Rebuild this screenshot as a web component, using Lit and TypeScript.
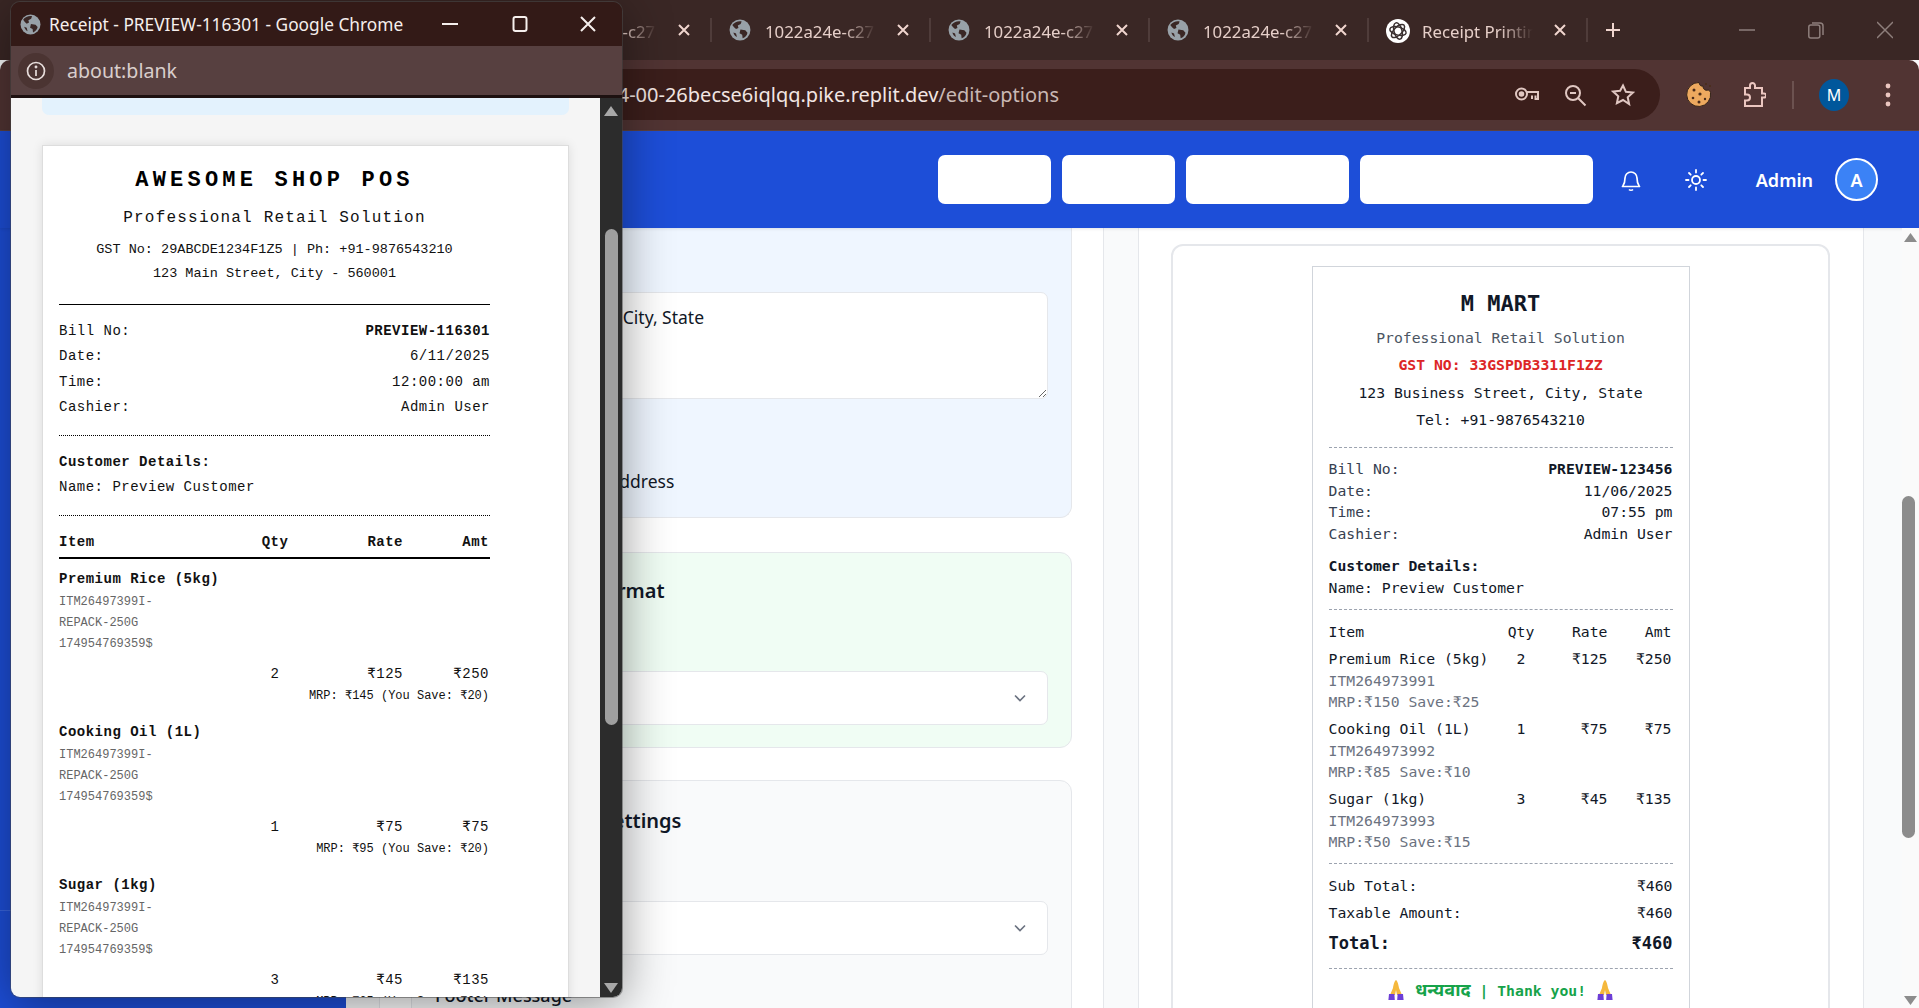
import { LitElement, html, css, svg } from "lit";
import { customElement } from "lit/decorators.js";

const globe = (s: number) => html`<svg width=${s} height=${s} viewBox="0 0 20 20"><circle cx="10" cy="10" r="9.5" fill="#98a1a8"/><path d="M3 5.5C5 2.5 9 1.5 11.5 2.2L10.6 4.6 8 6 8.6 8.2 6.4 9.2 4.6 7.6ZM10.4 9.6l4.4.6 2 2.2c-.4 2.4-2.2 4.4-4.4 5.2l-.4-3.2-2.4-1.4ZM4 12.2l2.4 1 .8 3.2C5.6 15.6 4.4 14 4 12.2Z" fill="#3a2725"/></svg>`;

const knot = html`<svg width="24" height="24" viewBox="0 0 24 24"><circle cx="12" cy="12" r="12" fill="#fff"/>
${[15, 75, 135].map((a) => svg`<ellipse cx="12" cy="12" rx="8.4" ry="4" transform="rotate(${a} 12 12)" fill="none" stroke="#3a3030" stroke-width="1.5"/>`)}
</svg>`;

const chevron = html`<svg class="chev" width="16" height="16" viewBox="0 0 16 16"><path d="M3 5.5l5 5 5-5" fill="none" stroke="#6b7280" stroke-width="1.6"/></svg>`;

const namaste = html`<svg class="nam" width="18" height="22" viewBox="0 0 18 22"><path d="M9 1c-1.600 1-2.600 5-3 8l-3 7h5l1-5 1 5h5l-3-7c-.4-3-1.400-7-3-8Z" fill="#f5b83d"/><path d="M2 15h5.400l.4 6H1.400ZM10.600 15H16l.6 6h-6.400Z" fill="#6d3fd6"/></svg>`;

interface PopItem { name: string; qty: string; rate: string; amt: string; mrp: string }
const popItems: PopItem[] = [
  { name: "Premium Rice (5kg)", qty: "2", rate: "₹125", amt: "₹250", mrp: "MRP: ₹145 (You Save: ₹20)" },
  { name: "Cooking Oil (1L)", qty: "1", rate: "₹75", amt: "₹75", mrp: "MRP: ₹95 (You Save: ₹20)" },
  { name: "Sugar (1kg)", qty: "3", rate: "₹45", amt: "₹135", mrp: "MRP: ₹65 (You Save: ₹20)" },
];
const rcItems = [
  { name: "Premium Rice (5kg)", qty: "2", rate: "₹125", amt: "₹250", code: "ITM264973991", mrp: "MRP:₹150 Save:₹25" },
  { name: "Cooking Oil (1L)", qty: "1", rate: "₹75", amt: "₹75", code: "ITM264973992", mrp: "MRP:₹85 Save:₹10" },
  { name: "Sugar (1kg)", qty: "3", rate: "₹45", amt: "₹135", code: "ITM264973993", mrp: "MRP:₹50 Save:₹15" },
];

@customElement("app-root")
export class AppRoot extends LitElement {
  static styles = css`
    :host { display: block; width: 1919px; height: 1008px; overflow: hidden; position: relative; font-family: "Noto Sans", "Open Sans", sans-serif; background: #f9fafb; color: #111827; }
    * { box-sizing: border-box; }
    .page { display: flex; flex-direction: column; height: 1008px; }

    .tabs { height: 60px; background: #3a2725; display: flex; padding-left: 493px; flex: none; }
    .tab { width: 219px; height: 60px; position: relative; display: flex; align-items: center; padding-left: 53px; }
    .tab::after { content: ""; position: absolute; right: 0; top: 18px; width: 2px; height: 24px; background: #4f3c3a; }
    .tab .ico { position: absolute; left: 17px; top: 19px; height: 24px; }
    .tab .t { width: 111px; overflow: hidden; white-space: nowrap; font-size: 16.8px; color: #e6cfc9; -webkit-mask-image: linear-gradient(90deg, #000 70%, transparent); mask-image: linear-gradient(90deg, #000 70%, transparent); margin-top: 3px; }
    .tab .x { position: absolute; left: 184px; top: 23px; }
    .plus { margin-left: 15px; margin-top: 20px; }
    .win { margin-left: auto; display: flex; padding-right: 26px; gap: 53px; padding-top: 20px; }

    .toolbar { height: 71px; flex: none; background: #513433; border-radius: 10px 10px 0 0; border-bottom: 1px solid #5f4341; display: flex; padding-top: 9px; }
    .url { margin-left: 60px; width: 1600px; height: 51px; background: #3b1e1b; border-radius: 26px; display: flex; }
    .url .txt { flex: 1; overflow: hidden; white-space: nowrap; display: flex; justify-content: flex-end; font-size: 20px; line-height: 52px; color: #f2e6e3; }
    .url .txt span { color: #c9b8b4; }
    .url .ic { width: 601px; display: flex; justify-content: flex-end; align-items: center; gap: 24px; padding-right: 25px; }
    .tools { display: flex; height: 51px; align-items: center; position: relative; }
    .cookie { margin-left: 26px; }
    .puzzle { margin-left: 30px; }
    .sep { width: 2px; height: 28px; background: #6c5250; margin-left: 26px; }
    .me { width: 30px; height: 32px; border-radius: 50%; background: #00579b; color: #fff; font-size: 16px; display: flex; align-items: center; justify-content: center; margin-left: 25px; }
    .dots { margin-left: 36px; }

    .head { height: 97px; flex: none; background: #1d4ed8; display: flex; align-items: center; justify-content: flex-end; padding-right: 41px; box-shadow: 0 1px 3px rgba(0,0,0,.1); position: relative; }
    .btn { height: 49px; background: #fff; border-radius: 7px; margin-left: 11px; }
    .bell { margin-left: 26px; display: flex; }
    .sun { margin-left: 41px; display: flex; }
    .admin { margin-left: 48px; color: #fff; font-weight: 600; font-size: 18px; }
    .av { width: 43px; height: 43px; border-radius: 50%; background: #3b82f6; border: 2px solid #fff; color: #fff; font-weight: 600; font-size: 18px; display: flex; align-items: center; justify-content: center; margin-left: 22px; }

    .body { flex: 1; min-height: 0; display: flex; overflow: hidden; }
    .side { width: 346px; flex: none; background: #1d4ed8; display: flex; flex-direction: column; }
    .side i { display: block; height: 683px; border-bottom: 1px solid #3a66e0; }
    .main { flex: 1; display: grid; grid-template-columns: 725px 726px; column-gap: 34px; padding: 0 38px 0 33px; overflow: hidden; }
    .panel { background: #fff; border-left: 1px solid #e5e7eb; border-right: 1px solid #e5e7eb; padding: 0 31px; height: 800px; }
    .panel.r { padding: 16px 33px 0 32px; }
    .card { border: 1px solid #e5e7eb; border-radius: 12px; padding: 0 23px; }
    .blue { background: #eff6ff; border-top: 0; border-radius: 0 0 12px 12px; height: 290px; margin-bottom: 34px; padding-top: 64px; }
    .green { background: #f0fdf4; height: 196px; margin-bottom: 32px; padding-top: 24px; }
    .grey { background: #f9fafb; height: 260px; padding-top: 26px; }
    textarea { display: block; width: 100%; height: 107px; border: 1px solid #e5e7eb; border-radius: 7px; background: #fff; padding: 11px 12px 11px 17px; font: 17.5px/26px "Noto Sans", sans-serif; color: #111827; outline: none; }
    .chk { margin-top: 69px; font-size: 17.5px; line-height: 26px; padding-left: 47px; }
    .ttl { font-size: 20px; font-weight: 600; line-height: 28px; }
    .green .ttl { padding-left: 81px; }
    .grey .ttl { padding-left: 114px; }
    .sel { height: 54px; margin-top: 66px; background: #fff; border: 1px solid #e5e7eb; border-radius: 7px; display: flex; align-items: center; justify-content: flex-end; padding-right: 19px; }
    .chev { display: block; }
    .foot { margin-top: 27px; font-size: 18px; line-height: 26px; font-weight: 500; }

    .rcard { border: 2px solid #e5e7eb; border-radius: 12px; background: #fff; padding: 20px 0 0; height: 800px; display: flex; justify-content: center; }
    .rc { width: 378px; height: 760px; border: 1px solid #d1d5db; padding: 22px 16px 0; font-family: "DejaVu Sans Mono", "Liberation Mono", monospace; font-size: 14.75px; line-height: 22px; color: #111827; letter-spacing: 0; }
    .rc h1 { margin: 0; font-size: 22px; line-height: 30px; font-weight: 700; text-align: center; }
    .rc .pr { margin-top: 8px; color: #4b5563; text-align: center; }
    .rc .gst { margin-top: 5px; color: #dc2626; font-weight: 700; text-align: center; }
    .rc .ad { margin-top: 3px; text-align: center; line-height: 27px; }
    .dash { border-top: 1px dashed #9ca3af; height: 0; }
    .kv { display: flex; justify-content: space-between; white-space: nowrap; }
    .kv .l { color: #374151; }
    .meta { margin-top: 10px; line-height: 21.7px; }
    .b { font-weight: 700; }
    .grid { display: grid; grid-template-columns: 179px 27px 73px 64px; white-space: nowrap; }
    .grid > :nth-child(2) { text-align: center; }
    .grid > :nth-child(3), .grid > :nth-child(4) { text-align: right; }
    .sub { color: #6b7280; line-height: 21.5px; white-space: nowrap; }
    .ritem { margin-top: 5px; }
    .tot { font-size: 17px; font-weight: 700; line-height: 26px; margin-top: 6px; }
    .thx { margin-top: 8px; line-height: 24px; color: #16a34a; font-weight: 700; display: flex; justify-content: center; align-items: center; gap: 10px; }
    .thx .hi { font-family: "Noto Sans", "Noto Sans Devanagari", sans-serif; font-size: 18px; }
    .nam { display: block; }

    .sb { width: 17px; flex: none; background: #fafafa; position: relative; }
    .sb .th { position: absolute; left: 0; width: 13px; top: 268px; height: 342px; background: #8c8c8c; border-radius: 7px; }
    .sb .up { position: absolute; left: 2px; top: 4px; }
    .sb .dn { position: absolute; left: 2px; bottom: 2px; }

    .pop { position: absolute; z-index: 5; left: 11px; top: 2px; width: 611px; height: 995px; border-radius: 9px; overflow: hidden; display: flex; flex-direction: column; box-shadow: 0 8px 50px rgba(0,0,0,.42), 0 0 0 1px rgba(90,90,90,.5); }
    .pt { height: 44px; background: #331a17; display: flex; align-items: center; flex: none; color: #f6efed; font-size: 17.3px; position: relative; padding-left: 9px; gap: 8px; }
    .pt .wb { position: absolute; top: 14px; }
    .pa { height: 49px; background: #574040; flex: none; display: flex; align-items: center; padding-left: 7px; }
    .pa .cir { width: 36px; height: 36px; border-radius: 50%; background: #4b3432; display: flex; align-items: center; justify-content: center; }
    .pa .tx { margin-left: 13px; font-size: 19.6px; color: #d9cecc; }
    .pl { height: 3px; background: #1d1110; flex: none; }
    .pc { flex: 1; min-height: 0; display: flex; }
    .pv { flex: 1; background: #f5f5f5; padding: 0 31px; overflow: hidden; }
    .strip { height: 17px; background: #e3f2fd; border-radius: 0 0 7px 7px; margin-bottom: 30px; }
    .rp { background: #fff; border: 1px solid #ddd; box-shadow: 0 0 10px rgba(0,0,0,.1); padding: 22px 78px 0 16px; height: 900px; font-family: "Liberation Mono", monospace; font-size: 14px; letter-spacing: .5px; color: #111; }
    .rp h2 { margin: 0; font-size: 22px; line-height: 26px; letter-spacing: 4.2px; text-align: center; font-weight: 700; color: #000; }
    .rp .p1 { margin-top: 13px; text-align: center; font-size: 16px; letter-spacing: 1.2px; line-height: 22px; }
    .rp .p2 { text-align: center; font-size: 13.5px; letter-spacing: 0; line-height: 24px; }
    .rp .p2.f { margin-top: 9px; }
    .solid { border-top: 1px solid #000; margin-top: 18px; }
    .dot { border-top: 1px dotted #000; margin-top: 15px; }
    .rows { margin-top: 14px; line-height: 25.3px; }
    .rp .kv .l { color: #111; }
    .cu { margin-top: 14px; line-height: 25px; }
    .pg { display: grid; grid-template-columns: 189px 54px 101px 86px; white-space: nowrap; }
    .pg > :nth-child(2) { text-align: center; }
    .pg > :nth-child(3), .pg > :nth-child(4) { text-align: right; }
    .ph { margin-top: 14px; line-height: 25px; font-weight: 700; }
    .ph2 { border-top: 2px solid #000; margin-top: 2px; }
    .pi { margin-top: 9px; }
    .pi + .pi { margin-top: 15px; }
    .pn { font-weight: 700; line-height: 22px; }
    .pcode { font-size: 12px; letter-spacing: 0; line-height: 21px; color: #666; margin-top: 2px; }
    .pnum { margin-top: 8px; line-height: 22px; }
    .pm { margin-top: 1px; font-size: 12px; letter-spacing: 0; line-height: 20px; text-align: right; padding-right: 1px; }
    .psb { width: 22px; flex: none; background: #2c2c2c; position: relative; }
    .psb .th { position: absolute; left: 5px; width: 13px; top: 131px; height: 496px; background: #9f9f9f; border-radius: 7px; }
    .psb .up { position: absolute; left: 4px; top: 7px; }
    .psb .dn { position: absolute; left: 4px; bottom: 3px; }
  `;

  private tab(title: string, ico: unknown) {
    return html`<div class="tab"><span class="ico">${ico}</span><span class="t">${title}</span>
      <svg class="x" width="14" height="14" viewBox="0 0 14 14"><path d="M2 2l10 10M12 2L2 12" stroke="#f0d5ce" stroke-width="2"/></svg></div>`;
  }

  render() {
    return html`
      <div class="page">
        <div class="tabs">
          ${this.tab("1022a24e-c27", globe(22))}
          ${this.tab("1022a24e-c27", globe(22))}
          ${this.tab("1022a24e-c27", globe(22))}
          ${this.tab("1022a24e-c27", globe(22))}
          ${this.tab("Receipt Printin", knot)}
          <svg class="plus" width="20" height="20" viewBox="0 0 20 20"><path d="M10 3v14M3 10h14" stroke="#f0d5ce" stroke-width="2"/></svg>
          <div class="win">
            <svg width="16" height="20" viewBox="0 0 16 20"><path d="M0 10h16" stroke="#8e7f7c" stroke-width="1.5"/></svg>
            <svg width="16" height="20" viewBox="0 0 16 20"><rect x=".8" y="5" width="11" height="13" rx="2" fill="none" stroke="#8e7f7c" stroke-width="1.5"/><path d="M4 3h8a3 3 0 0 1 3 3v9" fill="none" stroke="#8e7f7c" stroke-width="1.5"/></svg>
            <svg width="16" height="20" viewBox="0 0 16 20"><path d="M0 2l16 16M16 2L0 18" stroke="#8e7f7c" stroke-width="1.5"/></svg>
          </div>
        </div>
        <div class="toolbar">
          <div class="url">
            <div class="txt"><div>1022a24e-c271-4d2f-b1a4-00-26becse6iqlqq.pike.replit.dev<span>/edit-options</span></div></div>
            <div class="ic">
              <svg width="24" height="24" viewBox="0 0 24 24" fill="none" stroke="#e0c7c2" stroke-width="2"><circle cx="6.500" cy="11" r="5.500"/><circle cx="6.500" cy="11" r="1.800" fill="#e0c7c2"/><path d="M12 9h11v7h-2.500v-3.500M17 12.500v3.500"/></svg>
              <svg width="24" height="24" viewBox="0 0 24 24" fill="none" stroke="#e0c7c2" stroke-width="2"><circle cx="10" cy="10" r="7"/><path d="M15 15l7.500 7.500M7 10h6"/></svg>
              <svg width="24" height="24" viewBox="0 0 24 24" fill="none" stroke="#e0c7c2" stroke-width="2"><path d="M12 2.500l2.900 6.300 6.900.8-5.100 4.700 1.400 6.800L12 17l-6.100 3.100 1.400-6.800-5.100-4.700 6.900-.8Z"/></svg>
            </div>
          </div>
          <div class="tools">
            <svg class="cookie" width="26" height="28" viewBox="0 0 26 28"><path d="M13 1.500c.5 3 2 4 4 3.500 0 3 2 5 5 4 .8 0 2 1 2.500 2.500A12 12 0 1 1 13 1.500Z" fill="#eda95f" stroke="#33231a" stroke-width="1"/><g fill="#4a2c1a"><circle cx="8" cy="9" r="1.500"/><circle cx="14" cy="13" r="1.600"/><circle cx="7" cy="17" r="1.300"/><circle cx="13" cy="21" r="1.500"/><circle cx="19" cy="18" r="1.200"/><circle cx="20" cy="3" r="1"/><circle cx="24" cy="5" r="1"/></g></svg>
            <svg class="puzzle" width="24" height="26" viewBox="0 0 24 26" fill="none" stroke="#ebc6c0" stroke-width="2"><path d="M3 6h5V3.500a2.500 2.500 0 0 1 5 0V6h7v5.500h2a2 2 0 0 1 0 4h-2V24H3v-5.500h2a3 3 0 0 0 0-6H3Z"/></svg>
            <div class="sep"></div>
            <div class="me">M</div>
            <svg class="dots" width="6" height="26" viewBox="0 0 6 26"><g fill="#ebc6c0"><circle cx="3" cy="4" r="2.400"/><circle cx="3" cy="13" r="2.400"/><circle cx="3" cy="22" r="2.400"/></g></svg>
          </div>
        </div>
        <div class="head">
          <div class="btn" style="width:113px"></div>
          <div class="btn" style="width:113px"></div>
          <div class="btn" style="width:163px"></div>
          <div class="btn" style="width:233px"></div>
          <span class="bell"><svg width="24" height="24" viewBox="0 0 24 24" fill="none" stroke="#fff" stroke-width="1.700" stroke-linejoin="round"><path d="M6 10a6 6 0 0 1 12 0c0 6 2 7.500 2.500 8.500h-17C4 17.500 6 16 6 10Z"/><path d="M10 21.500c1 1 3 1 4 0"/></svg></span>
          <span class="sun"><svg width="24" height="24" viewBox="0 0 24 24" fill="none" stroke="#fff" stroke-width="1.800" stroke-linecap="round"><circle cx="12" cy="12" r="4"/><path d="M12 2v2.500M12 19.500V22M2 12h2.500M19.500 12H22M5 5l1.700 1.700M17.300 17.300L19 19M5 19l1.700-1.700M17.300 6.700L19 5"/></svg></span>
          <span class="admin">Admin</span>
          <div class="av">A</div>
        </div>
        <div class="body">
          <div class="side"><i></i></div>
          <div class="main">
            <div class="panel">
              <div class="card blue">
                <textarea .value=${"123 Business Street, City, State"}></textarea>
                <div class="chk">Show Business Address</div>
              </div>
              <div class="card green">
                <div class="ttl">Receipt Format</div>
                <div class="sel">${chevron}</div>
              </div>
              <div class="card grey">
                <div class="ttl">Print Settings</div>
                <div class="sel">${chevron}</div>
                <div class="foot">Footer Message</div>
              </div>
            </div>
            <div class="panel r">
              <div class="rcard">
                <div class="rc">
                  <h1>M MART</h1>
                  <div class="pr">Professional Retail Solution</div>
                  <div class="gst">GST NO: 33GSPDB3311F1ZZ</div>
                  <div class="ad">123 Business Street, City, State<br />Tel: +91-9876543210</div>
                  <div class="dash" style="margin-top:14px"></div>
                  <div class="meta">
                    <div class="kv"><span class="l">Bill No:</span><span class="b">PREVIEW-123456</span></div>
                    <div class="kv"><span class="l">Date:</span><span>11/06/2025</span></div>
                    <div class="kv"><span class="l">Time:</span><span>07:55 pm</span></div>
                    <div class="kv"><span class="l">Cashier:</span><span>Admin User</span></div>
                  </div>
                  <div class="b" style="margin-top:10px">Customer Details:</div>
                  <div>Name: Preview Customer</div>
                  <div class="dash" style="margin-top:10px"></div>
                  <div class="grid" style="margin-top:11px"><span>Item</span><span>Qty</span><span>Rate</span><span>Amt</span></div>
                  ${rcItems.map((i) => html`<div class="ritem">
                    <div class="grid"><span>${i.name}</span><span>${i.qty}</span><span>${i.rate}</span><span>${i.amt}</span></div>
                    <div class="sub">${i.code}</div>
                    <div class="sub">${i.mrp}</div>
                  </div>`)}
                  <div class="dash" style="margin-top:10px"></div>
                  <div class="kv" style="margin-top:11px"><span>Sub Total:</span><span>₹460</span></div>
                  <div class="kv" style="margin-top:5px"><span>Taxable Amount:</span><span>₹460</span></div>
                  <div class="kv tot"><span>Total:</span><span>₹460</span></div>
                  <div class="dash" style="margin-top:12px"></div>
                  <div class="thx">${namaste}<span><span class="hi">धन्यवाद</span> | Thank you!</span>${namaste}</div>
                </div>
              </div>
            </div>
          </div>
          <div class="sb">
            <svg class="up" width="13" height="10" viewBox="0 0 13 10"><path d="M6.500 1L13 10H0Z" fill="#8c8c8c"/></svg>
            <div class="th"></div>
            <svg class="dn" width="13" height="10" viewBox="0 0 13 10"><path d="M6.500 9L13 0H0Z" fill="#8c8c8c"/></svg>
          </div>
        </div>
      </div>

      <div class="pop">
        <div class="pt">
          ${globe(21)}
          <span>Receipt - PREVIEW-116301 - Google Chrome</span>
          <svg class="wb" style="left:431px" width="16" height="16" viewBox="0 0 16 16"><path d="M0 8h16" stroke="#f6efed" stroke-width="2"/></svg>
          <svg class="wb" style="left:501px" width="16" height="16" viewBox="0 0 16 16"><rect x="1.500" y="1" width="13" height="14" rx="2" fill="none" stroke="#f6efed" stroke-width="2"/></svg>
          <svg class="wb" style="left:569px" width="16" height="16" viewBox="0 0 16 16"><path d="M1 1l14 14M15 1L1 15" stroke="#f6efed" stroke-width="2"/></svg>
        </div>
        <div class="pa">
          <div class="cir"><svg width="20" height="20" viewBox="0 0 20 20" fill="none" stroke="#e8dedc" stroke-width="1.700"><circle cx="10" cy="10" r="8.500"/><path d="M10 9v6"/><circle cx="10" cy="6" r=".6"/></svg></div>
          <span class="tx">about:blank</span>
        </div>
        <div class="pl"></div>
        <div class="pc">
          <div class="pv">
            <div class="strip"></div>
            <div class="rp">
              <h2>AWESOME SHOP POS</h2>
              <div class="p1">Professional Retail Solution</div>
              <div class="p2 f">GST No: 29ABCDE1234F1Z5 | Ph: +91-9876543210</div>
              <div class="p2">123 Main Street, City - 560001</div>
              <div class="solid"></div>
              <div class="rows">
                <div class="kv"><span class="l">Bill No:</span><span class="b">PREVIEW-116301</span></div>
                <div class="kv"><span class="l">Date:</span><span>6/11/2025</span></div>
                <div class="kv"><span class="l">Time:</span><span>12:00:00 am</span></div>
                <div class="kv"><span class="l">Cashier:</span><span>Admin User</span></div>
              </div>
              <div class="dot"></div>
              <div class="cu"><div class="b">Customer Details:</div><div>Name: Preview Customer</div></div>
              <div class="dot"></div>
              <div class="pg ph"><span>Item</span><span>Qty</span><span>Rate</span><span>Amt</span></div>
              <div class="ph2"></div>
              ${popItems.map((i) => html`<div class="pi">
                <div class="pn">${i.name}</div>
                <div class="pcode">ITM26497399I-<br />REPACK-250G<br />174954769359$</div>
                <div class="pg pnum"><span></span><span>${i.qty}</span><span>${i.rate}</span><span>${i.amt}</span></div>
                <div class="pm">${i.mrp}</div>
              </div>`)}
            </div>
          </div>
          <div class="psb">
            <svg class="up" width="14" height="12" viewBox="0 0 14 12"><path d="M7 1l7 10H0Z" fill="#a8a8a8"/></svg>
            <div class="th"></div>
            <svg class="dn" width="14" height="12" viewBox="0 0 14 12"><path d="M7 11l7-10H0Z" fill="#a8a8a8"/></svg>
          </div>
        </div>
      </div>
    `;
  }
}
